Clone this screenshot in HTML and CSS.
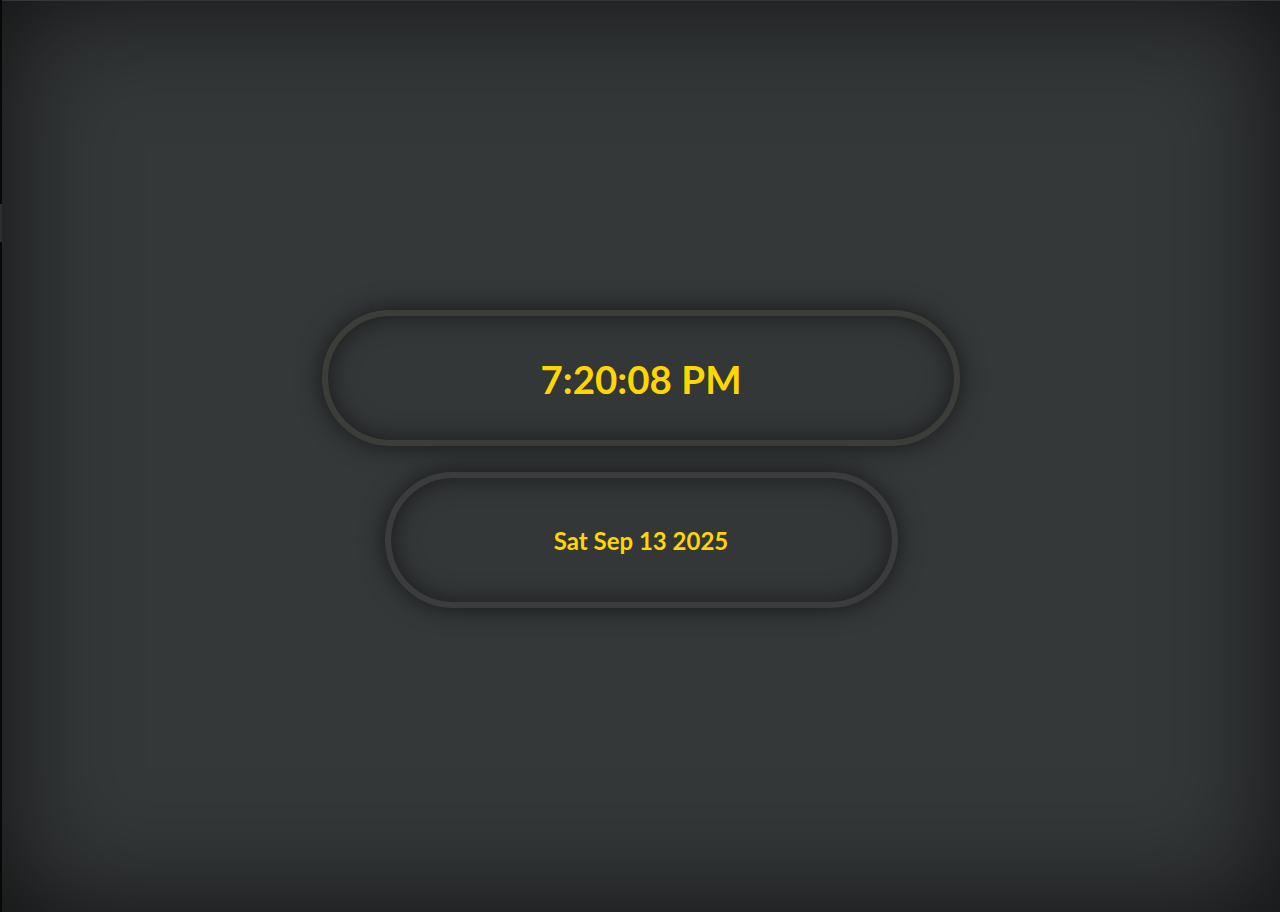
FILE: index.html
```html
<!DOCTYPE html>
<html lang="en">
<head>
<meta charset="utf-8">
<title>Clock</title>
<link rel="stylesheet" href="styles.css">
</head>
<body>
<div class="edge"><span class="edge-mark"></span></div>
<main class="screen">
  <div class="pill pill-time"><span class="time">7:20:08 PM</span></div>
  <div class="pill pill-date"><span class="date">Sat Sep 13 2025</span></div>
</main>
</body>
</html>
```
FILE: styles.css
```css
html, body {
  margin: 0;
  height: 100%;
  background: #0b0c0c;
}
body {
  display: flex;
  font-family: "Lato", "Open Sans", sans-serif;
}
.edge {
  width: 2px;
  flex: none;
  background: #070808;
  display: flex;
  flex-direction: column;
  padding-top: 204px;
}
.edge-mark {
  display: block;
  height: 38px;
  background: #2c2e2f;
}
.screen {
  flex: 1;
  display: flex;
  flex-direction: column;
  align-items: center;
  justify-content: center;
  gap: 26px;
  padding-top: 4px;
  background: #353839;
  border-top: 1px solid #353637;
  box-shadow: inset 0 0 120px rgba(0, 0, 0, 0.7);
}
.pill {
  box-sizing: border-box;
  height: 136px;
  border-radius: 68px;
  border: 6px solid #3c3d38;
  display: flex;
  align-items: center;
  justify-content: center;
  background: #343738;
  box-shadow: 0 0 24px rgba(0, 0, 0, 0.6), inset 0 0 24px rgba(0, 0, 0, 0.55);
  color: #ffd600;
  font-weight: 700;
}
.pill-time {
  width: 638px;
}
.pill-date {
  width: 513px;
  border-color: #3a3c3d;
}
.time {
  font-size: 38.5px;
  margin-top: 2px;
}
.date {
  font-size: 24px;
  margin-top: 2px;
}
```
